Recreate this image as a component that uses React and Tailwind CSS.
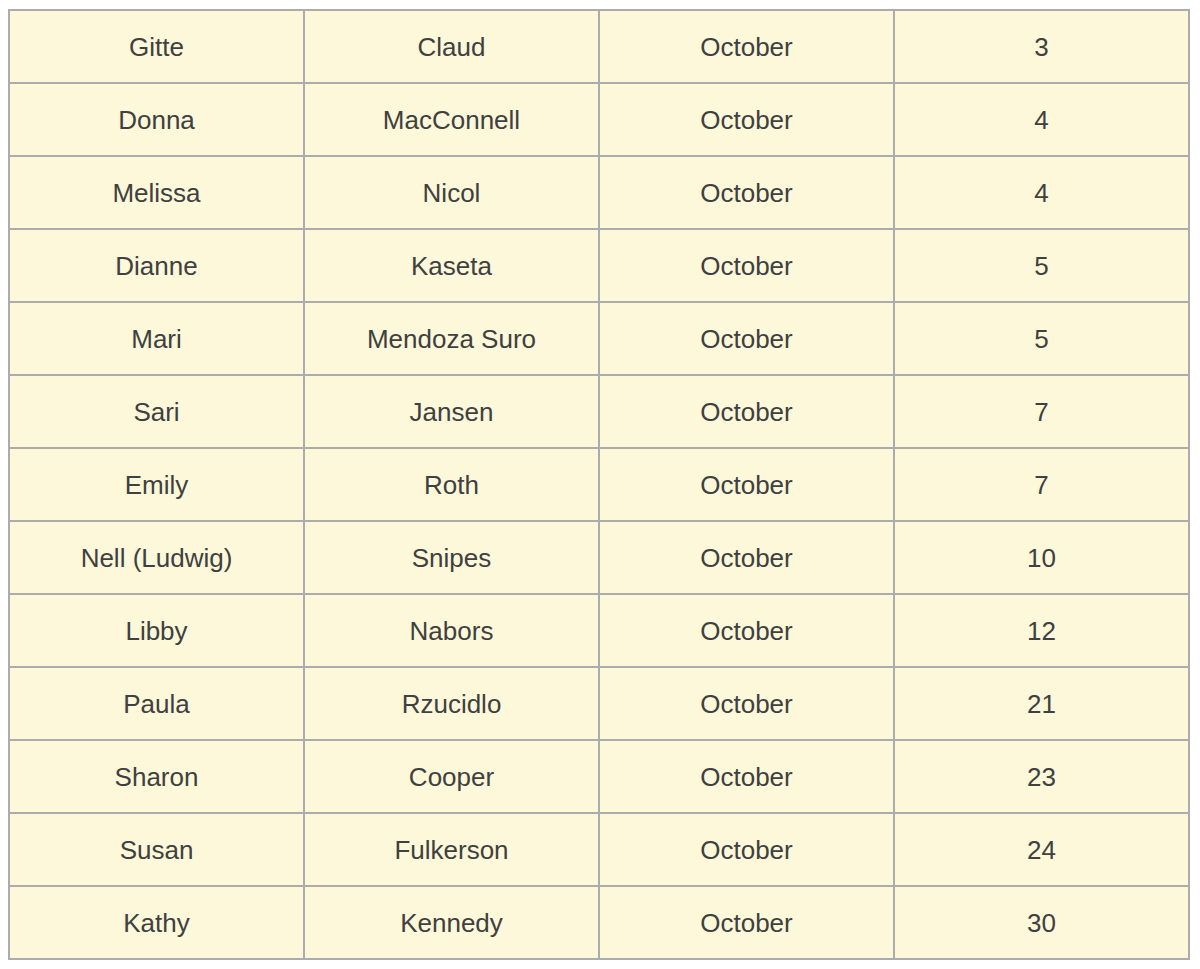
import React from 'react';

const rows = [
  ['Gitte', 'Claud', 'October', '3'],
  ['Donna', 'MacConnell', 'October', '4'],
  ['Melissa', 'Nicol', 'October', '4'],
  ['Dianne', 'Kaseta', 'October', '5'],
  ['Mari', 'Mendoza Suro', 'October', '5'],
  ['Sari', 'Jansen', 'October', '7'],
  ['Emily', 'Roth', 'October', '7'],
  ['Nell (Ludwig)', 'Snipes', 'October', '10'],
  ['Libby', 'Nabors', 'October', '12'],
  ['Paula', 'Rzucidlo', 'October', '21'],
  ['Sharon', 'Cooper', 'October', '23'],
  ['Susan', 'Fulkerson', 'October', '24'],
  ['Kathy', 'Kennedy', 'October', '30'],
];

export default function App() {
  return (
    <div className="min-h-screen bg-white pt-[9px] pl-[8px] font-['Liberation_Sans',Arial,sans-serif]">
      <table className="border-collapse w-[1182px] bg-[#fcf8d9] text-[#404040] text-[26px]">
        <tbody>
          {rows.map((r, i) => (
            <tr key={i} className="h-[73px]">
              {r.map((c, j) => (
                <td key={j} className="border-2 border-[#acacac] text-center w-[295px] px-0 pt-[2px] pb-0">
                  {c}
                </td>
              ))}
            </tr>
          ))}
        </tbody>
      </table>
    </div>
  );
}
